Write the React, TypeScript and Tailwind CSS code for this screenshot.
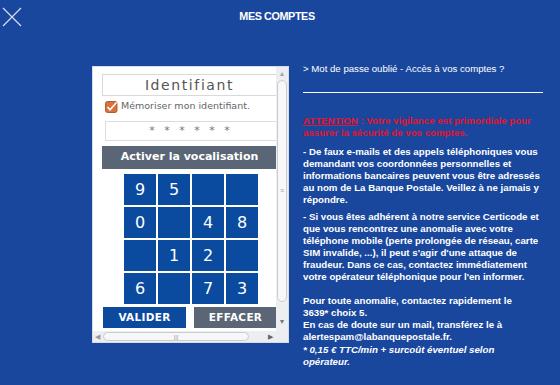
import React from 'react';

const keys: string[] = ['9', '5', '', '', '0', '', '4', '8', '', '1', '2', '', '6', '', '7', '3'];

const CloseIcon: React.FC = () => (
  <svg width="20" height="20" viewBox="0 0 20 20" className="block">
    <path d="M1 1 L19 19 M19 1 L1 19" stroke="#d5def2" strokeWidth="1.2" fill="none" />
  </svg>
);

const CheckBox: React.FC = () => (
  <svg width="13" height="12" viewBox="0 0 13 12" className="block shrink-0">
    <rect x="0.5" y="0.5" width="11.5" height="11" rx="2" fill="#d9713f" stroke="#b85a2c" />
    <path d="M2.5 6 L5 8.8 L11.5 1.5" stroke="#fff" strokeWidth="1.6" fill="none" />
  </svg>
);

// login box with its fake scrollbars
const LoginPanel: React.FC = () => (
  <div className="w-[197px] h-[277px] bg-white border border-[#d8dce4] grid grid-cols-[1fr_12px] grid-rows-[1fr_11px] overflow-hidden">
    <div className="overflow-hidden pl-[9px] pt-[7px] font-['DejaVu_Sans',sans-serif]">
      <div className="w-[175px] h-[22px] border border-[#d9d9d9] flex items-center justify-center text-[14px] tracking-[1.6px] text-[#555]">
        Identifiant
      </div>
      <div className="flex items-center gap-[3px] mt-[4px] ml-[3px] h-[13px]">
        <CheckBox />
        <span className="text-[9.5px] text-[#666] whitespace-nowrap">Mémoriser mon identifiant.</span>
      </div>
      <div className="ml-[3px] mt-[8px] w-[172px] h-[20px] border border-[#dcdcdc] flex items-center justify-center text-[11px] tracking-[3px] text-[#777]">
        * * * * * *
      </div>
      <div className="mt-[5px] w-[175px] h-[23px] bg-[#5a6576] text-white font-bold text-[11px] flex items-center justify-center whitespace-nowrap">
        Activer la vocalisation
      </div>
      <div className="mt-[5px] ml-[22px] grid grid-cols-[repeat(4,32px)] grid-rows-[repeat(4,31px)] gap-[2px] w-[134px]">
        {keys.map((k, i) => (
          <div key={i} className="bg-[#0a4b9f] text-white text-[16px] flex items-center justify-center">
            {k}
          </div>
        ))}
      </div>
      <div className="flex mt-[3px] ml-[1px] gap-[8px] whitespace-nowrap">
        <div className="w-[83px] h-[21px] shrink-0 bg-[#0c4a9e] text-white font-bold text-[10.5px] flex items-center justify-center tracking-[0.3px]">
          VALIDER
        </div>
        <div className="w-[83px] h-[21px] shrink-0 bg-[#5a6576] text-white font-bold text-[10.5px] flex items-center justify-center tracking-[0.3px]">
          EFFACER
        </div>
      </div>
    </div>
    {/* vertical scrollbar */}
    <div className="bg-[#eceef1] flex flex-col items-center py-[2px]">
      <div className="text-[7px] leading-none text-[#9aa] mt-[1px]">▲</div>
      <div className="mt-[3px] w-[10px] h-[222px] rounded-full bg-[#f7f7f7] border border-[#c9ccd1] flex items-center justify-center text-[7px] text-[#aaa]">
        ≡
      </div>
      <div className="flex-1" />
      <div className="text-[7px] leading-none text-[#777] mb-[4px]">▼</div>
    </div>
    {/* horizontal scrollbar */}
    <div className="bg-[#eceef1] flex items-center px-[2px]">
      <div className="text-[7px] leading-none text-[#999]">◀</div>
      <div className="ml-[3px] w-[146px] h-[9px] rounded-full bg-[#f7f7f7] border border-[#c9ccd1] flex items-center justify-center text-[6px] leading-none text-[#999]">
        |||
      </div>
      <div className="flex-1" />
      <div className="text-[7px] leading-none text-[#666] mr-[1px]">▶</div>
    </div>
    <div className="bg-[#eceef1]" />
  </div>
);

const App: React.FC = () => {
  return (
    <div className="w-[560px] h-[385px] bg-[#1a479e] overflow-hidden font-['Liberation_Sans',sans-serif]">
      {/* Header */}
      <header className="h-[32px] flex items-center">
        <div className="w-[24px] pl-[2px] pt-[2px]">
          <CloseIcon />
        </div>
        <h1 className="flex-1 pr-[30px] text-center text-white font-bold text-[10.8px] tracking-[-0.4px]">
          MES COMPTES
        </h1>
      </header>

      <div className="flex pl-[92px] pt-[30px]">
        <div className="mt-[4px]">
          <LoginPanel />
        </div>

        <div className="ml-[14px] w-[240px] text-white">
          <p className="text-[9.65px] leading-[13px] whitespace-nowrap">&gt; Mot de passe oublié - Accès à vos comptes ?</p>
          <div className="mt-[17px] h-[1px] bg-white" />

          <div className="mt-[22px] text-[9.7px] leading-[12px] font-bold whitespace-nowrap">
            <p className="text-[#e5132c]">
              <span className="underline">ATTENTION</span> : Votre vigilance est primordiale pour
              <br />
              assurer la sécurité de vos comptes.
            </p>
            <p className="mt-[7px]">
              - De faux e-mails et des appels téléphoniques vous
              <br />
              demandant vos coordonnées personnelles et
              <br />
              informations bancaires peuvent vous être adressés
              <br />
              au nom de La Banque Postale. Veillez à ne jamais y
              <br />
              répondre.
            </p>
            <p className="mt-[5px]">
              - Si vous êtes adhérent à notre service Certicode et
              <br />
              que vous rencontrez une anomalie avec votre
              <br />
              téléphone mobile (perte prolongée de réseau, carte
              <br />
              SIM invalide, ...), il peut s'agir d'une attaque de
              <br />
              fraudeur. Dans ce cas, contactez immédiatement
              <br />
              votre opérateur téléphonique pour l'en informer.
            </p>
            <p className="mt-[12px]">
              Pour toute anomalie, contactez rapidement le
              <br />
              3639* choix 5.
              <br />
              En cas de doute sur un mail, transférez le à
              <br />
              alertespam@labanquepostale.fr.
            </p>
            <p className="mt-[1px] italic">
              * 0,15 € TTC/min + surcoût éventuel selon
              <br />
              opérateur.
            </p>
          </div>
        </div>
      </div>
    </div>
  );
};

export default App;
